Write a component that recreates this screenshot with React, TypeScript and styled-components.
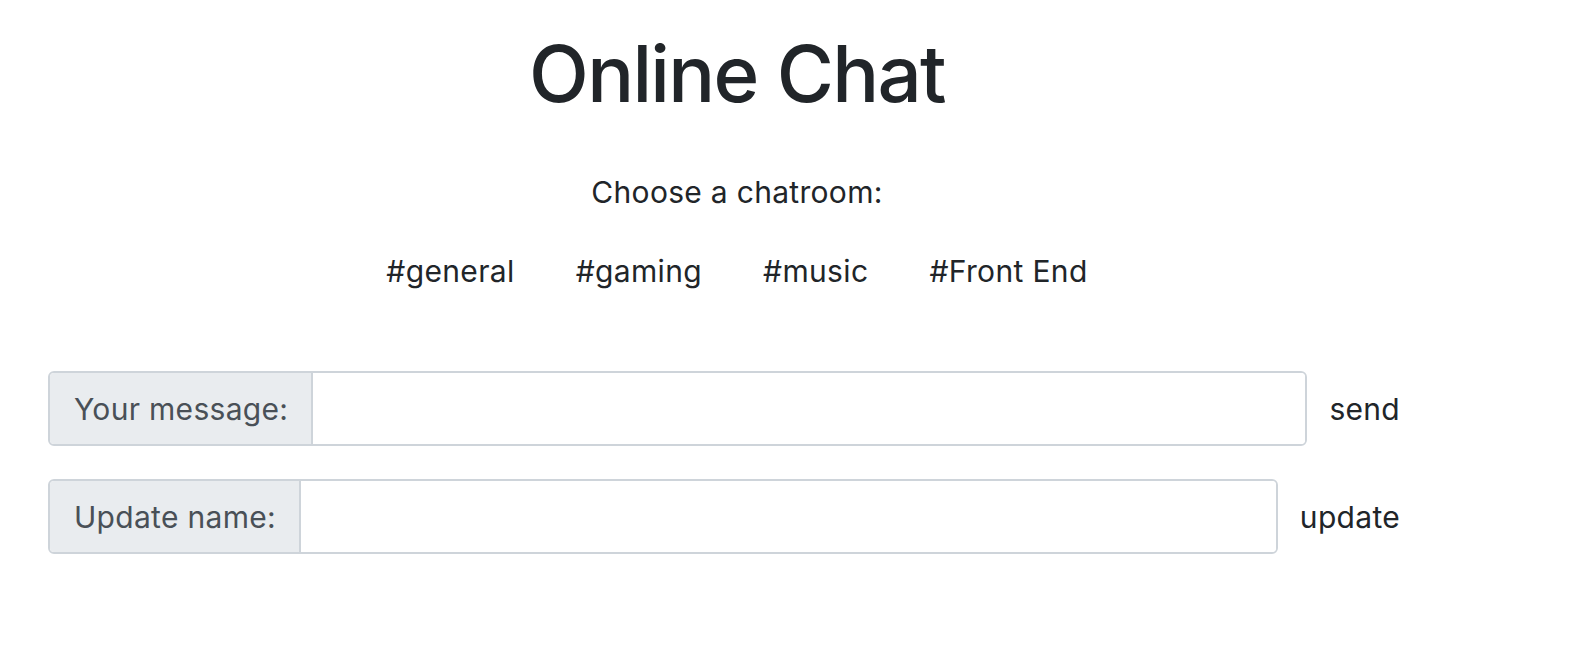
import React from "react";
import styled, { createGlobalStyle } from "styled-components";

const GlobalStyle = createGlobalStyle`
  html, body {
    margin: 0;
    padding: 0;
    background: #ffffff;
  }
  body {
    font-family: Inter, "Noto Sans", "Liberation Sans", sans-serif;
    color: #212529;
  }
  * { box-sizing: border-box; }
`;

const Page = styled.div`
  width: 1378px;
  margin-left: 48px;
  padding-top: 27px;
`;

const Header = styled.header`
  display: flex;
  flex-direction: column;
  align-items: center;
`;

const Title = styled.h1`
  margin: 0;
  font-size: 78px;
  font-weight: 500;
  line-height: 1.2;
  letter-spacing: -1.7px;
  color: #212529;
`;

const Subtitle = styled.p`
  margin: 49px 0 0;
  font-size: 30px;
  line-height: 45px;
  letter-spacing: 0.3px;
  font-weight: 400;
`;

const RoomList = styled.nav`
  display: flex;
  gap: 61px;
  margin-top: 34px;
`;

const Room = styled.a`
  font-size: 30px;
  line-height: 45px;
  letter-spacing: 0.35px;
  color: #212529;
  text-decoration: none;
  cursor: pointer;
`;

const Form = styled.form`
  display: flex;
  flex-direction: column;
  gap: 33px;
  margin-top: 77px;
`;

const Row = styled.div`
  display: flex;
  align-items: center;
`;

const Group = styled.div`
  flex: 1;
  display: flex;
  height: 75px;
  border: 2px solid #ced4da;
  border-radius: 6px;
  overflow: hidden;
`;

const Label = styled.span`
  display: flex;
  align-items: center;
  padding: 2px 23px 0 24px;
  background: #e9ecef;
  border-right: 2px solid #ced4da;
  color: #495057;
  font-size: 30px;
  letter-spacing: 0.3px;
  white-space: nowrap;
`;

const Input = styled.input`
  flex: 1;
  border: none;
  outline: none;
  font-size: 30px;
  padding: 0 24px;
  font-family: inherit;
  background: #fff;
`;

const Action = styled.button`
  background: none;
  border: none;
  padding: 2px 26px 0 22px;
  font-family: inherit;
  font-size: 30px;
  letter-spacing: 0.3px;
  color: #212529;
  cursor: pointer;
`;

const rooms = ["#general", "#gaming", "#music", "#Front End"];

export default function App() {
  return (
    <>
      <GlobalStyle />
      <Page>
        <Header>
          <Title>Online Chat</Title>
          <Subtitle>Choose a chatroom:</Subtitle>
          <RoomList>
            {rooms.map((r) => (
              <Room key={r}>{r}</Room>
            ))}
          </RoomList>
        </Header>
        <Form onSubmit={(e) => e.preventDefault()}>
          <Row>
            <Group>
              <Label>Your message:</Label>
              <Input type="text" />
            </Group>
            <Action type="button">send</Action>
          </Row>
          <Row>
            <Group>
              <Label>Update name:</Label>
              <Input type="text" />
            </Group>
            <Action type="button">update</Action>
          </Row>
        </Form>
      </Page>
    </>
  );
}
